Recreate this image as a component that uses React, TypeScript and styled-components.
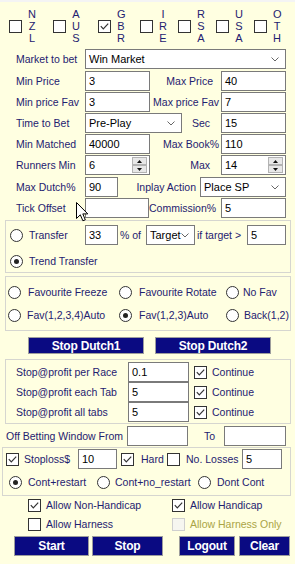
import React from "react";
import styled, { createGlobalStyle } from "styled-components";

const GlobalStyle = createGlobalStyle`
  html, body {
    margin: 0;
    padding: 0;
    background: #ffffe1;
  }
  body {
    font-family: "Liberation Sans", Arial, sans-serif;
    font-size: 10.5px;
    color: #1e2170;
  }
`;

const Page = styled.div`
  position: relative;
  width: 295px;
  height: 564px;
  overflow: hidden;
  background: #ffffe1;
`;

const TopEdge = styled.div`
  height: 2px;
  background: #f4f4f4;
  border-bottom: 0;
`;

const Countries = styled.div`
  display: flex;
  margin-top: 6px;
  padding-left: 9px;
  height: 36px;
`;

const Country = styled.div<{ $w: number }>`
  display: flex;
  align-items: center;
  width: ${(p) => p.$w}px;
  flex-shrink: 0;
`;

const Letters = styled.div`
  display: flex;
  flex-direction: column;
  margin-left: 6px;
  width: 8px;
  font-size: 11px;
  line-height: 12px;
  text-align: center;
`;

const CheckBox = styled.span<{ $disabled?: boolean }>`
  display: flex;
  align-items: center;
  justify-content: center;
  width: 13px;
  height: 13px;
  box-sizing: border-box;
  flex-shrink: 0;
  border: 1px solid ${(p) => (p.$disabled ? "#cfcfcf" : "#333")};
  background: ${(p) => (p.$disabled ? "#f6f6f0" : "#fff")};
`;

const RadioCircle = styled.span`
  display: flex;
  align-items: center;
  justify-content: center;
  width: 13px;
  height: 13px;
  box-sizing: border-box;
  flex-shrink: 0;
  border: 1px solid #333;
  border-radius: 50%;
  background: #fff;
`;

const RadioDot = styled.span`
  width: 5px;
  height: 5px;
  border-radius: 50%;
  background: #222;
`;

const Form = styled.div`
  margin-top: 5px;
`;

const Row = styled.div<{ $h: number; $pl?: number; $mt?: number }>`
  display: flex;
  align-items: flex-start;
  height: ${(p) => p.$h}px;
  width: 286px;
  margin-top: ${(p) => p.$mt ?? 0}px;
  padding-left: ${(p) => p.$pl ?? 16}px;
  box-sizing: border-box;
`;

const Label = styled.div<{ $w?: number; $pr?: number; $pl?: number; $right?: boolean }>`
  ${(p) => (p.$w ? `width: ${p.$w}px; flex-shrink: 0;` : "flex: 1;")}
  height: 20px;
  line-height: 20px;
  white-space: nowrap;
  box-sizing: border-box;
  text-align: ${(p) => (p.$right ? "right" : "left")};
  padding-right: ${(p) => p.$pr ?? 0}px;
  padding-left: ${(p) => p.$pl ?? 0}px;
`;

const TextBox = styled.div<{ $w: number }>`
  display: flex;
  align-items: center;
  justify-content: space-between;
  width: ${(p) => p.$w}px;
  height: 20px;
  flex-shrink: 0;
  box-sizing: border-box;
  border: 1px solid #7a7a7a;
  background: #fff;
  color: #000;
  font-size: 11px;
  padding-left: 3px;
  white-space: nowrap;
`;

const Chevron = styled.svg`
  margin-right: 6px;
  flex-shrink: 0;
`;

const SpinButtons = styled.div`
  display: flex;
  flex-direction: column;
  margin-right: 2px;
  gap: 0;
`;

const SpinButton = styled.div`
  display: flex;
  align-items: center;
  justify-content: center;
  width: 15px;
  height: 8px;
  box-sizing: border-box;
  border: 1px solid #b3b3b3;
  background: #e8e8e8;
`;

const Group = styled.div<{ $ml?: number; $w?: number; $mt?: number; $pt: number; $pb: number }>`
  margin-top: ${(p) => p.$mt ?? 0}px;
  margin-left: ${(p) => p.$ml ?? 5}px;
  width: ${(p) => p.$w ?? 286}px;
  box-sizing: border-box;
  border: 1px solid #d6d6d0;
  padding-top: ${(p) => p.$pt}px;
  padding-bottom: ${(p) => p.$pb}px;
`;

const Line = styled.div<{ $h: number; $pl: number; $mt?: number }>`
  display: flex;
  align-items: center;
  height: ${(p) => p.$h}px;
  margin-top: ${(p) => p.$mt ?? 0}px;
  padding-left: ${(p) => p.$pl}px;
`;

const Option = styled.div<{ $w?: number }>`
  display: flex;
  align-items: center;
  white-space: nowrap;
  ${(p) => (p.$w ? `width: ${p.$w}px; flex-shrink: 0;` : "")}
`;

const OptionText = styled.span<{ $gap: number; $disabled?: boolean }>`
  margin-left: ${(p) => p.$gap}px;
  color: ${(p) => (p.$disabled ? "#aaa445" : "inherit")};
`;

const Small = styled.span<{ $w: number }>`
  width: ${(p) => p.$w}px;
  flex-shrink: 0;
  padding-left: 2px;
  box-sizing: border-box;
  white-space: nowrap;
`;

const ButtonRow = styled.div<{ $mt: number; $pl: number; $h: number }>`
  display: flex;
  margin-top: ${(p) => p.$mt}px;
  padding-left: ${(p) => p.$pl}px;
  height: ${(p) => p.$h}px;
`;

const NavyButton = styled.div<{ $w: number; $ml?: number }>`
  display: flex;
  align-items: center;
  justify-content: center;
  width: ${(p) => p.$w}px;
  margin-left: ${(p) => p.$ml ?? 0}px;
  box-sizing: border-box;
  border: 1px solid #9d9d9d;
  background: #0a0a82;
  color: #fff;
  font-weight: bold;
  font-size: 12px;
  letter-spacing: -0.2px;
`;

const Cursor = styled.svg`
  position: absolute;
  left: 76px;
  top: 202px;
`;

const Check = ({ on, disabled }: { on?: boolean; disabled?: boolean }) => (
  <CheckBox $disabled={disabled}>
    {on && (
      <svg width="11" height="11" viewBox="0 0 11 11">
        <polyline points="1.8,5.2 4.3,7.8 9.2,2.6" fill="none" stroke="#333" strokeWidth="1.2" />
      </svg>
    )}
  </CheckBox>
);

const Radio = ({ on }: { on?: boolean }) => <RadioCircle>{on && <RadioDot />}</RadioCircle>;

const DropDown = ({ w, value, mr }: { w: number; value: string; mr?: number }) => (
  <TextBox $w={w}>
    <span>{value}</span>
    <Chevron width="8" height="5" viewBox="0 0 8 5" style={mr ? { marginRight: mr } : undefined}>
      <polyline points="0.5,0.5 4,4 7.5,0.5" fill="none" stroke="#666" strokeWidth="1" />
    </Chevron>
  </TextBox>
);

const Spinner = ({ w, value }: { w: number; value: string }) => (
  <TextBox $w={w}>
    <span>{value}</span>
    <SpinButtons>
      <SpinButton>
        <svg width="5" height="3" viewBox="0 0 5 3">
          <polygon points="0,3 2.5,0 5,3" fill="#111" />
        </svg>
      </SpinButton>
      <SpinButton>
        <svg width="5" height="3" viewBox="0 0 5 3">
          <polygon points="0,0 2.5,3 5,0" fill="#111" />
        </svg>
      </SpinButton>
    </SpinButtons>
  </TextBox>
);

const countries = [
  { code: "NZL", w: 44 },
  { code: "AUS", w: 45 },
  { code: "GBR", w: 42, on: true },
  { code: "IRE", w: 38 },
  { code: "RSA", w: 38 },
  { code: "USA", w: 38 },
  { code: "OTH", w: 38 },
];

const App = () => {
  return (
    <Page>
      <GlobalStyle />
      <TopEdge />
      <Countries>
        {countries.map((c) => (
          <Country key={c.code} $w={c.w}>
            <Check on={c.on} />
            <Letters>
              {c.code.split("").map((l, i) => (
                <span key={i}>{l}</span>
              ))}
            </Letters>
          </Country>
        ))}
      </Countries>

      <Form>
        <Row $h={22}>
          <Label $w={69}>Market to bet</Label>
          <DropDown w={201} value="Win Market" />
        </Row>
        <Row $h={21}>
          <Label $w={69}>Min Price</Label>
          <TextBox $w={65}>3</TextBox>
          <Label $right $pr={8}>Max Price</Label>
          <TextBox $w={65}>40</TextBox>
        </Row>
        <Row $h={21}>
          <Label $w={69}>Min price Fav</Label>
          <TextBox $w={65}>3</TextBox>
          <Label $right $pr={2}>Max price Fav</Label>
          <TextBox $w={65}>7</TextBox>
        </Row>
        <Row $h={21}>
          <Label $w={69}>Time to Bet</Label>
          <DropDown w={97} value="Pre-Play" />
          <Label $right $pr={11}>Sec</Label>
          <TextBox $w={65}>15</TextBox>
        </Row>
        <Row $h={21}>
          <Label $w={69}>Min Matched</Label>
          <TextBox $w={65}>40000</TextBox>
          <Label $right $pr={2}>Max Book%</Label>
          <TextBox $w={65}>110</TextBox>
        </Row>
        <Row $h={22}>
          <Label $w={69}>Runners Min</Label>
          <Spinner w={65} value="6" />
          <Label $right $pr={11}>Max</Label>
          <Spinner w={65} value="14" />
        </Row>
        <Row $h={21}>
          <Label $w={69}>Max Dutch%</Label>
          <TextBox $w={33}>90</TextBox>
          <Label $right $pr={4}>Inplay Action</Label>
          <DropDown w={86} value="Place SP" />
        </Row>
        <Row $h={21}>
          <Label $w={69}>Tick Offset</Label>
          <TextBox $w={64}></TextBox>
          <Label $right $pr={5}>Commission%</Label>
          <TextBox $w={65}>5</TextBox>
        </Row>
      </Form>

      <Group $mt={1} $pt={4} $pb={1}>
        <Line $h={20} $pl={4}>
          <Option $w={75}>
            <Radio />
            <OptionText $gap={6}>Transfer</OptionText>
          </Option>
          <TextBox $w={33}>33</TextBox>
          <Small $w={28}>% of</Small>
          <DropDown w={49} value="Target" mr={5} />
          <Small $w={52}>if target &gt;</Small>
          <TextBox $w={39}>5</TextBox>
        </Line>
        <Line $h={20} $pl={4} $mt={6}>
          <Option>
            <Radio on />
            <OptionText $gap={6}>Trend Transfer</OptionText>
          </Option>
        </Line>
      </Group>

      <Group $mt={3} $pt={6} $pb={6}>
        <Line $h={18} $pl={2}>
          <Option $w={111}>
            <Radio />
            <OptionText $gap={7}>Favourite Freeze</OptionText>
          </Option>
          <Option $w={107}>
            <Radio />
            <OptionText $gap={7}>Favourite Rotate</OptionText>
          </Option>
          <Option>
            <Radio />
            <OptionText $gap={4}>No Fav</OptionText>
          </Option>
        </Line>
        <Line $h={18} $pl={2} $mt={5}>
          <Option $w={111}>
            <Radio />
            <OptionText $gap={6}>Fav(1,2,3,4)Auto</OptionText>
          </Option>
          <Option $w={107}>
            <Radio on />
            <OptionText $gap={7}>Fav(1,2,3)Auto</OptionText>
          </Option>
          <Option>
            <Radio />
            <OptionText $gap={5}>Back(1,2)</OptionText>
          </Option>
        </Line>
      </Group>

      <ButtonRow $mt={6} $pl={28} $h={17}>
        <NavyButton $w={116}>Stop Dutch1</NavyButton>
        <NavyButton $w={116} $ml={11}>Stop Dutch2</NavyButton>
      </ButtonRow>

      <Group $mt={5} $pt={2} $pb={1}>
        {[
          { label: "Stop@profit per Race", value: "0.1" },
          { label: "Stop@profit each Tab", value: "5" },
          { label: "Stop@profit all tabs", value: "5" },
        ].map((r) => (
          <Line key={r.label} $h={20} $pl={10}>
            <Label $w={112}>{r.label}</Label>
            <TextBox $w={61}>{r.value}</TextBox>
            <Option>
              <span style={{ width: 5 }} />
              <Check on />
              <OptionText $gap={5}>Continue</OptionText>
            </Option>
          </Line>
        ))}
      </Group>

      <Row $h={20} $pl={6} $mt={2}>
        <Label $w={121}>Off Betting Window From</Label>
        <TextBox $w={61}></TextBox>
        <Label $w={36} $pl={16}>To</Label>
        <TextBox $w={62}></TextBox>
      </Row>

      <Group $mt={1} $ml={2} $w={289} $pt={1} $pb={4}>
        <Line $h={20} $pl={3}>
          <Option $w={72}>
            <Check on />
            <OptionText $gap={5}>Stoploss$</OptionText>
          </Option>
          <TextBox $w={39}>10</TextBox>
          <Option $w={50}>
            <span style={{ width: 4 }} />
            <Check on />
            <OptionText $gap={7}>Hard</OptionText>
          </Option>
          <Option $w={75}>
            <Check />
            <OptionText $gap={6}>No. Losses</OptionText>
          </Option>
          <TextBox $w={40}>5</TextBox>
        </Line>
        <Line $h={18} $pl={6} $mt={4}>
          <Option $w={88}>
            <Radio on />
            <OptionText $gap={6}>Cont+restart</OptionText>
          </Option>
          <Option $w={101}>
            <Radio />
            <OptionText $gap={5}>Cont+no_restart</OptionText>
          </Option>
          <Option>
            <Radio />
            <OptionText $gap={6}>Dont Cont</OptionText>
          </Option>
        </Line>
      </Group>

      <Line $h={18} $pl={28}>
        <Option $w={144}>
          <Check on />
          <OptionText $gap={5}>Allow Non-Handicap</OptionText>
        </Option>
        <Option>
          <Check on />
          <OptionText $gap={5}>Allow Handicap</OptionText>
        </Option>
      </Line>
      <Line $h={18} $pl={28} $mt={1}>
        <Option $w={144}>
          <Check />
          <OptionText $gap={5}>Allow Harness</OptionText>
        </Option>
        <Option>
          <Check disabled />
          <OptionText $gap={5} $disabled>
            Allow Harness Only
          </OptionText>
        </Option>
      </Line>

      <ButtonRow $mt={3} $pl={14} $h={20}>
        <NavyButton $w={75}>Start</NavyButton>
        <NavyButton $w={71} $ml={3}>Stop</NavyButton>
        <NavyButton $w={56} $ml={16}>Logout</NavyButton>
        <NavyButton $w={51} $ml={4}>Clear</NavyButton>
      </ButtonRow>

      <Cursor width="13" height="20" viewBox="0 0 13 20">
        <path
          d="M0.5,0.5 L0.5,16.5 L4.3,12.8 L6.9,18.8 L9.3,17.8 L6.8,11.9 L11.8,11.9 Z"
          fill="#fff"
          stroke="#000"
          strokeWidth="1"
          strokeLinejoin="round"
        />
      </Cursor>
    </Page>
  );
};

export default App;
